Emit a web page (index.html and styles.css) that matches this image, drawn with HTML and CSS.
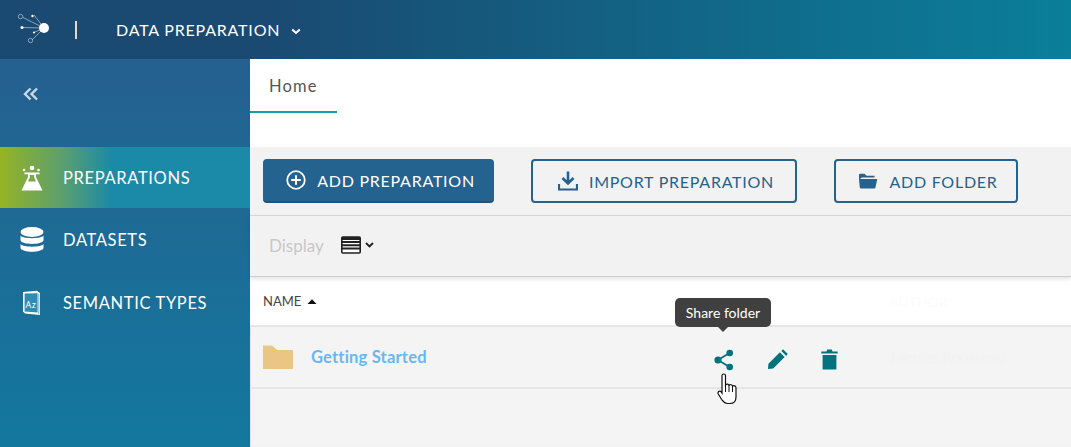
FILE: index.html
```html
<!DOCTYPE html>
<html lang="en">
<head>
    <meta charset="UTF-8">
    <title>Data Preparation</title>
    <link rel="stylesheet" href="styles.css">
</head>
<body>

<header class="topbar">
    <svg class="logo" width="34" height="34" viewBox="0 0 34 34">
        <g stroke="#b9c9d6" stroke-width="0.7" fill="none">
            <path d="M27 16 L6 5.5 M27 16 L17 3 M27 16 L5 15.5 M27 16 L18 20 M27 16 L15 28"/>
            <circle cx="3.5" cy="4.5" r="2.2"/>
            <circle cx="13.5" cy="28.5" r="2.2"/>
        </g>
        <circle cx="27" cy="16" r="5" fill="#fff"/>
        <circle cx="15.5" cy="4" r="1.2" fill="#fff"/>
        <circle cx="5" cy="15.5" r="1.5" fill="#fff"/>
        <circle cx="17" cy="20.5" r="1.1" fill="#fff"/>
    </svg>
    <span class="divider"></span>
    <span class="app-name">DATA PREPARATION</span>
    <svg class="caret" width="10" height="7" viewBox="0 0 10 7"><path d="M1.2 1.5 L5 5 L8.8 1.5" fill="none" stroke="#fff" stroke-width="2"/></svg>
</header>

<div class="layout">
    <!-- Left navigation -->
    <nav class="sidebar">
        <div class="collapse">
            <svg width="16" height="14" viewBox="0 0 16 14"><path d="M7.5 1.5 L2 7 L7.5 12.5 M14 1.5 L8.5 7 L14 12.5" fill="none" stroke="#c9d9e6" stroke-width="2.4"/></svg>
        </div>
        <div class="nav-item active">
            <svg width="24" height="26" viewBox="0 0 24 26">
                <circle cx="12" cy="3" r="2.3" fill="#fff"/>
                <circle cx="4" cy="5" r="1.3" fill="#fff"/>
                <circle cx="18.5" cy="5" r="1.3" fill="#fff"/>
                <path d="M4.5 7.5 H19.5 V9.2 H16 V12 L22.5 25.5 H1.5 L8 12 V9.2 H4.5 Z M9.8 10 V12.6 L8 16.5 H16 L14.2 12.6 V10 Z" fill="#fff" fill-rule="evenodd"/>
            </svg>
            <span>PREPARATIONS</span>
        </div>
        <div class="nav-item datasets">
            <svg width="24" height="26" viewBox="0 0 24 26">
                <ellipse cx="12" cy="5" rx="11.5" ry="5" fill="#fff"/>
                <path d="M0.5 8.5 C2 12 22 12 23.5 8.5 V13.5 C22 18 2 18 0.5 13.5 Z" fill="#fff"/>
                <path d="M0.5 17 C2 20.5 22 20.5 23.5 17 V21 C22 26 2 26 0.5 21 Z" fill="#fff"/>
            </svg>
            <span>DATASETS</span>
        </div>
        <div class="nav-item semantic">
            <svg width="20" height="26" viewBox="0 0 20 26">
                <path d="M1 2 L15 0.8 L18 3 V25 L3 23.5 L1 21.5 Z" fill="#fff"/>
                <path d="M2.6 3.6 L15.6 3.2 V22.6 L2.6 21.4 Z" fill="#2f8db3"/>
                <path d="M16.6 3.8 H17.2 V24 H16.6 Z" fill="#1a6f96"/>
                <text x="3.4" y="18" class="book-text">Az</text>
            </svg>
            <span>SEMANTIC TYPES</span>
        </div>
    </nav>

    <main class="content">
        <div class="tabs">
            <div class="tab">Home</div>
        </div>

        <div class="actions">
            <button class="btn btn-primary btn-add">
                <svg width="20" height="20" viewBox="0 0 20 20"><circle cx="10" cy="10" r="8.8" fill="none" stroke="#fff" stroke-width="1.8"/><path d="M10 5.2 V14.8 M5.2 10 H14.8" stroke="#fff" stroke-width="2"/></svg>
                ADD PREPARATION
            </button>
            <button class="btn btn-outline btn-import">
                <svg width="20" height="20" viewBox="0 0 20 20"><path d="M10 0.5 V12 M4.5 7 L10 12.5 L15.5 7" fill="none" stroke="#24628f" stroke-width="2.6"/><path d="M1 13 V18.5 H19 V13" fill="none" stroke="#24628f" stroke-width="2.2"/></svg>
                IMPORT PREPARATION
            </button>
            <button class="btn btn-outline btn-folder">
                <svg width="20" height="16" viewBox="0 0 19 16"><path d="M0.5 2 Q0.5 0.8 1.7 0.8 H6 L8 2.8 H16 V4.4 H3.5 L0.5 6.5 Z" fill="#24628f"/><path d="M0.5 6 H18.7 L17 14.6 Q17 15.4 16 15.4 H2.2 Q1.4 15.4 1.3 14.6 Z" fill="#24628f"/></svg>
                ADD FOLDER
            </button>
        </div>

        <div class="display-row">
            <span class="display-label">Display</span>
            <svg width="20" height="18" viewBox="0 0 20 18"><rect x="0.8" y="1" width="18.4" height="16" rx="1" fill="#fff" stroke="#222" stroke-width="1.6"/><path d="M1 6 H19 M1 9.2 H19 M1 12.4 H19" stroke="#222" stroke-width="2"/><path d="M1 2.5 H19" stroke="#222" stroke-width="3"/></svg>
            <svg class="display-caret" width="9" height="6" viewBox="0 0 9 6"><path d="M1 1 L4.5 4.5 L8 1" fill="none" stroke="#222" stroke-width="1.8"/></svg>
        </div>

        <div class="table-head">
            <span class="col-name">NAME</span>
            <svg width="10" height="5" viewBox="0 0 10 5"><path d="M0.5 5 L5 0.3 L9.5 5 Z" fill="#111"/></svg>
            <span class="col-author">AUTHOR</span>
        </div>

        <div class="table-row">
            <svg class="folder" width="30" height="24" viewBox="0 0 30 24"><path d="M0 0.5 H9 L14 5 H30 V24 H0 Z" fill="#eac583"/></svg>
            <a class="row-name">Getting Started</a>
            <div class="row-icons">
                <svg width="20" height="22" viewBox="0 0 20 22"><path d="M15.5 4 L4 11 L15.5 18" fill="none" stroke="#00737f" stroke-width="1.8"/><circle cx="15.7" cy="4" r="3.3" fill="#00737f"/><circle cx="4" cy="11" r="3.6" fill="#00737f"/><circle cx="15.7" cy="18" r="3.3" fill="#00737f"/></svg>
                <svg width="21" height="21" viewBox="0 0 22 22"><path d="M1 21 L1.5 15.5 L13.5 3.5 L18.5 8.5 L6.5 20.5 Z M15 2 L16.8 0.3 L21.8 5.2 L20 7 Z" fill="#00737f"/></svg>
                <svg width="17" height="21" viewBox="0 0 17 21"><path d="M0.3 2.4 H5.5 L6.2 0.5 H10.8 L11.5 2.4 H16.7 V4.6 H0.3 Z M1.6 6 H15.4 V20.5 H1.6 Z" fill="#00737f"/></svg>
            </div>
            <span class="row-author">Nicolas Rousseau</span>
        </div>

        <div class="empty"></div>
    </main>
</div>

<!-- Hover state: tooltip and mouse pointer -->
<div class="tooltip">Share folder</div>
<svg class="pointer" width="22" height="32" viewBox="0 0 22 32">
    <path d="M5 2.5 C5 0.5 8.5 0.5 8.5 2.5 V12 C9.5 10.8 11.5 11 12 12.3 C13 11.3 15 11.6 15.5 13 C16.7 12.3 19 12.8 19 15 V24 C19 28 17 30.5 13 30.5 H10.5 C7.5 30.5 6.5 29 5 27 L1.3 21 C0.2 19 2.7 17.2 4.2 18.8 L5 20 Z" fill="#fff" stroke="#111" stroke-width="1.2"/>
    <path d="M8.5 12 V19 M12 12.3 V19 M15.5 13 V19" stroke="#111" stroke-width="1" fill="none"/>
</svg>

</body>
</html>
```

FILE: styles.css
```css
html, body {
    margin: 0;
    padding: 0;
    height: 447px;
    overflow: hidden;
}

body {
    position: relative;
    font-family: "Lato", "Noto Sans", sans-serif;
    background-color: #f4f4f4;
}

.topbar {
    height: 59px;
    display: flex;
    align-items: center;
    background: linear-gradient(90deg, #1a4a72 0%, #1a4a72 25%, #0a7f9a 100%);
    color: white;
}

.logo {
    margin-left: 17px;
    margin-top: -1px;
}

.divider {
    width: 2px;
    height: 18px;
    margin-left: 24px;
    background-color: #e6d8c8;
}

.app-name {
    margin-left: 39px;
    font-size: 16px;
    letter-spacing: 0.8px;
}

.caret {
    margin-left: 11px;
    margin-top: 4px;
}

.layout {
    display: flex;
    height: 388px;
}

.sidebar {
    width: 250px;
    flex-shrink: 0;
    background: linear-gradient(180deg, #25608f 0%, #13789e 100%);
    color: white;
}

.collapse {
    height: 88px;
    box-sizing: border-box;
    padding: 26px 0 0 23px;
}

.nav-item {
    height: 61px;
    display: flex;
    align-items: center;
    padding-left: 20px;
    font-size: 16.5px;
    letter-spacing: 0.65px;
}

.nav-item svg {
    width: 24px;
    margin-right: 19px;
    flex-shrink: 0;
}

.nav-item.active {
    background: linear-gradient(90deg, #96b423 0%, #5b9f6e 25%, #1a8aa8 45%, #1a8aa8 100%);
}

.nav-item.datasets {
    height: 64px;
}

.book-text {
    font-family: "Noto Sans", sans-serif;
    font-size: 9px;
    fill: #fff;
}

.content {
    flex: 1;
    min-width: 0;
    background-color: #f4f4f4;
    box-shadow: inset 1px 0 1px rgba(0, 0, 0, 0.08);
}

.tabs {
    height: 88px;
    background-color: white;
}

.tab {
    width: 87px;
    height: 54px;
    box-sizing: border-box;
    padding: 17px 0 0 19px;
    border-bottom: 2px solid #10a0ae;
    font-size: 16.5px;
    letter-spacing: 1.2px;
    color: #555;
}

.actions {
    height: 69px;
    box-sizing: border-box;
    display: flex;
    padding: 12px 0 0 13px;
    background-color: #f2f2f2;
    border-bottom: 1px solid #d8d8d8;
}

.btn {
    height: 44px;
    box-sizing: border-box;
    display: flex;
    align-items: center;
    justify-content: center;
    border-radius: 4px;
    font-family: inherit;
    font-size: 16px;
    letter-spacing: 0.75px;
    padding: 0 0 0 4px;
}

.btn-primary {
    background-color: #24628f;
    color: white;
    border: none;
    border-bottom: 2px solid #1f5379;
}

.btn-outline {
    background-color: #f2f2f2;
    color: #24628f;
    border: 2px solid #24628f;
}

.btn svg {
    margin-right: 11px;
}

.btn-add {
    width: 231px;
}

.btn-import {
    width: 266px;
    margin-left: 37px;
}

.btn-folder {
    width: 184px;
    margin-left: 37px;
}

.display-row {
    height: 61px;
    box-sizing: border-box;
    display: flex;
    align-items: center;
    padding: 0 0 2px 19px;
    background-color: #f2f2f2;
    border-bottom: 1px solid #d0d0d0;
    box-shadow: 0 2px 4px rgba(0, 0, 0, 0.12);
    position: relative;
}

.display-label {
    font-size: 17px;
    color: #c8c8c8;
    margin-right: 17px;
}

.display-caret {
    margin-left: 4px;
}

.table-head {
    height: 50px;
    box-sizing: border-box;
    display: flex;
    align-items: center;
    padding-left: 13px;
    background-color: white;
    border-bottom: 2px solid #e6e6e6;
}

.col-name {
    font-size: 13px;
    color: #444;
    margin-right: 6px;
}

.col-author {
    margin-left: 572px;
    font-size: 14px;
    color: #fcfcfc;
}

.table-row {
    height: 62px;
    box-sizing: border-box;
    display: flex;
    align-items: center;
    padding-left: 13px;
    border-bottom: 2px solid #e6e6e6;
}

.folder {
    flex-shrink: 0;
}

.row-name {
    width: 403px;
    margin-left: 18px;
    font-size: 16.5px;
    font-weight: 700;
    letter-spacing: 0.2px;
    color: #66b8f5;
}

.row-icons {
    display: flex;
    align-items: center;
    gap: 33px;
    margin-top: 5px;
}

.row-author {
    margin-left: 53px;
    font-size: 15px;
    color: #f2f2f2;
}

.tooltip {
    position: absolute;
    left: 675px;
    top: 298px;
    width: 96px;
    height: 29px;
    box-sizing: border-box;
    text-align: center;
    line-height: 30px;
    border-radius: 5px;
    background-color: #404040;
    color: white;
    font-size: 14px;
}

.tooltip::after {
    content: "";
    position: absolute;
    left: 43px;
    top: 29px;
    border: 5px solid transparent;
    border-top-color: #404040;
    border-bottom: none;
}

.pointer {
    position: absolute;
    left: 717px;
    top: 373px;
}
```
